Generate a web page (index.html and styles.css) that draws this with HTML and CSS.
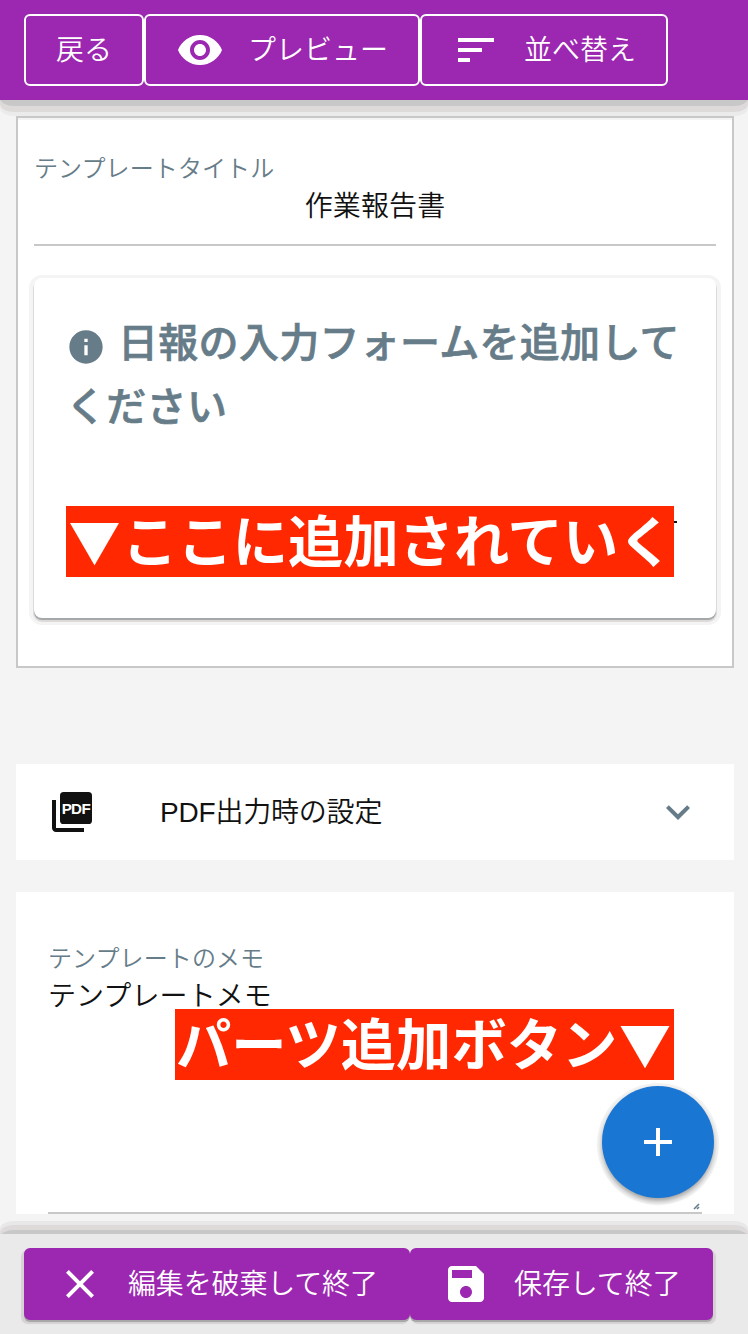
FILE: index.html
```html
<!DOCTYPE html>
<html lang="ja">
<head>
<meta charset="utf-8">
<title>作業報告書</title>
<link rel="stylesheet" href="styles.css">
</head>
<body>
<div class="app">
  <header class="header">
    <button class="btn outlined"><span>戻る</span></button>
    <button class="btn outlined">
      <svg class="icon" viewBox="0 0 24 24"><path d="M12 4.5C7 4.5 2.73 7.61 1 12c1.73 4.39 6 7.5 11 7.5s9.27-3.11 11-7.5c-1.73-4.39-6-7.5-11-7.5zM12 17c-2.76 0-5-2.24-5-5s2.24-5 5-5 5 2.24 5 5-2.24 5-5 5zm0-8c-1.66 0-3 1.34-3 3s1.34 3 3 3 3-1.34 3-3-1.34-3-3-3z"/></svg>
      <span>プレビュー</span>
    </button>
    <button class="btn outlined">
      <svg class="icon" viewBox="0 0 24 24"><path d="M3 18h6v-2H3v2zM3 6v2h18V6H3zm0 7h12v-2H3v2z"/></svg>
      <span>並べ替え</span>
    </button>
  </header>

  <main class="main">
    <section class="template">
      <div class="field">
        <div class="label">テンプレートタイトル</div>
        <div class="value centered">作業報告書</div>
      </div>
      <div class="card">
        <h2 class="guide"><svg class="info" viewBox="0 0 24 24"><path d="M12 2C6.48 2 2 6.48 2 12s4.480 10 10 10 10-4.480 10-10S17.520 2 12 2zm1 15h-2v-6h2v6zm0-8h-2V7h2v2z"/></svg>日報の入力フォームを追加してください</h2>
        <div class="drop"><span class="note"><span class="tri">▼</span>ここに追加されていく</span><span class="tick"></span></div>
      </div>
    </section>

    <section class="panel">
      <svg class="icon" viewBox="0 0 24 24"><path d="M4 6H2v14c0 1.100.900 2 2 2h14v-2H4V6z"/><rect x="6" y="2" width="16" height="16" rx="1.800"/><text class="pdf" x="6.900 11.500 16.700" y="12.800">PDF</text></svg>
      <span class="panel-title">PDF出力時の設定</span>
      <svg class="icon chevron" viewBox="0 0 24 24"><path d="M16.590 8.590L12 13.170 7.410 8.590 6 10l6 6 6-6z"/></svg>
    </section>

    <section class="memo">
      <div class="memo-field">
        <div class="label">テンプレートのメモ</div>
        <div class="value">テンプレートメモ</div>
        <svg class="grip" viewBox="0 0 8 8"><path d="M1 7L6 2M4 7L6 5"/></svg>
      </div>
      <span class="note note-add">パーツ追加ボタン<span class="tri">▼</span></span>
      <button class="fab"><svg class="icon" viewBox="0 0 24 24"><path d="M19 13h-6v6h-2v-6H5v-2h6V5h2v6h6v2z"/></svg></button>
    </section>
  </main>

  <footer class="footer">
    <button class="btn filled discard">
      <svg class="icon" viewBox="0 0 24 24"><path d="M19 6.410L17.590 5 12 10.590 6.410 5 5 6.410 10.590 12 5 17.590 6.410 19 12 13.410 17.590 19 19 17.590 13.410 12z"/></svg>
      <span>編集を破棄して終了</span>
    </button>
    <button class="btn filled save">
      <svg class="icon" viewBox="0 0 24 24"><path d="M17 3H5c-1.110 0-2 .900-2 2v14c0 1.100.890 2 2 2h14c1.100 0 2-.900 2-2V7l-4-4zm-5 16c-1.660 0-3-1.340-3-3s1.340-3 3-3 3 1.340 3 3-1.340 3-3 3zm3-10H5V5h10v4z"/></svg>
      <span>保存して終了</span>
    </button>
  </footer>
</div>
</body>
</html>
```
FILE: styles.css
```css
* { box-sizing: border-box; }
body {
  margin: 0;
  background: #f4f4f4;
  color: #111;
  font-family: "Liberation Sans", "Noto Sans CJK JP", sans-serif;
  font-size: 28px;
  font-weight: 350;
}
.app {
  display: flex;
  flex-direction: column;
  width: 748px;
  height: 1334px;
  overflow: hidden;
}
.icon { width: 48px; height: 48px; fill: currentColor; flex: none; display: block; }

.header, .footer {
  position: relative;
  z-index: 2;
  display: flex;
  flex: none;
  height: 100px;
  padding: 14px 24px;
}
.header { background: #9c27b0; }
.footer { background: #eaeaea; }
.header::after, .footer::before {
  content: "";
  position: absolute;
  left: 0;
  right: 0;
  pointer-events: none;
}
.header::after {
  top: 0;
  bottom: -6px;
  border-radius: 0 0 14px 14px / 0 0 8px 8px;
  background: #c8c8c8;
  box-shadow: 0 6px #dedada, 0 10px #ebebeb;
  clip-path: inset(100px 0 -10px);
}
.footer::before {
  top: -4px;
  bottom: 0;
  border-radius: 14px 14px 0 0 / 8px 8px 0 0;
  background: #c8c8c8;
  box-shadow: 0 -5px #dedada, 0 -9px #e8e8e8, 0 -16px #f4f4f4;
  clip-path: inset(-16px 0 100px);
}

.btn {
  display: flex;
  align-items: center;
  gap: 24px;
  height: 72px;
  padding: 0 30px;
  border: 2px solid #fff;
  border-radius: 6px;
  background: #9c27b0;
  color: #fff;
  font: inherit;
  line-height: 40px;
  white-space: nowrap;
}
.btn span { padding-top: 1px; }
.filled { border-color: #9c27b0; }
.discard {
  width: 386px;
  letter-spacing: -.15px;
  box-shadow: 0 2px #a8a8a8, -2px 3px 1px 1px #d6d2d4;
}
.save {
  width: 303px;
  letter-spacing: -.1px;
  box-shadow: 0 2px #a8a8a8, 2px 3px 1px 1px #d6d2d4;
}
.discard { position: relative; z-index: 1; }

.main { flex: 1; min-height: 0; padding: 16px 14px 0 16px; }
.template {
  height: 552px;
  padding: 33px 16px 0;
  border: 2px solid #c8c8c8;
  background: #fff;
  box-shadow: inset 0 2px #f4f4f4;
}
.label { color: #667c88; font-size: 24px; letter-spacing: .1px; line-height: 36px; }
.value { line-height: 40px; letter-spacing: .1px; }
.centered { text-align: center; }
.field { height: 95px; border-bottom: 2px solid #c8c8c8; }
.card {
  height: 340px;
  margin-top: 32px;
  padding: 32px;
  border-radius: 8px;
  background: #fff;
  box-shadow: 0 2px #a5a8aa, 0 3px 0 1px #dedada, 0 2px 0 5px #f4f4f4;
}
.guide {
  margin: 0 -8px 0 0;
  padding-top: 1px;
  color: #667c88;
  font-size: 40px;
  font-weight: 500;
  letter-spacing: .3px;
  line-height: 64px;
  -webkit-text-stroke: .7px currentColor;
}
.info {
  width: 40px;
  height: 40px;
  margin-right: 12px;
  fill: currentColor;
  vertical-align: -10px;
}
.drop { display: flex; margin-top: 67px; }
.note {
  display: block;
  width: 608px;
  height: 71px;
  padding-left: 1px;
  background: #ff2800;
  color: #fff;
  font-family: "Noto Sans CJK JP", sans-serif;
  font-size: 55.3px;
  font-weight: 700;
  line-height: 64px;
  white-space: nowrap;
}
.tri { padding: 0 1.6px; font-size: 52px; font-weight: 400; }
.tick { width: 3px; height: 2px; margin-top: 15px; background: #111; }

.panel {
  display: flex;
  align-items: center;
  height: 96px;
  margin-top: 96px;
  padding: 0 32px;
  background: #fff;
}
.pdf {
  fill: #fff;
  font-family: "Liberation Sans", sans-serif;
  font-size: 7.6px;
  font-weight: 700;
}
.panel-title { flex: 1; margin-left: 64px; padding-top: 1px; letter-spacing: -.2px; line-height: 40px; }
.chevron { color: #667c88; }

.memo {
  position: relative;
  height: 342px;
  margin-top: 32px;
  padding: 49px 32px 0;
  background: #fff;
}
.memo-field { position: relative; height: 273px; border-bottom: 2px solid #c8c8c8; }
.grip {
  position: absolute;
  right: 1px;
  bottom: 2px;
  width: 8px;
  height: 8px;
  fill: none;
  stroke: #667c88;
  stroke-width: 1.6;
}
.note-add { position: absolute; top: 117px; right: 60px; width: 499px; }
.fab {
  position: absolute;
  top: 194px;
  right: 20px;
  display: grid;
  place-items: center;
  width: 112px;
  height: 112px;
  padding: 0;
  border: 0;
  border-radius: 50%;
  background: #1976d2;
  color: #fff;
  box-shadow: 0 3px 5px rgba(0, 0, 0, .35), 0 2px 0 5px #f4f4f4;
}
```
